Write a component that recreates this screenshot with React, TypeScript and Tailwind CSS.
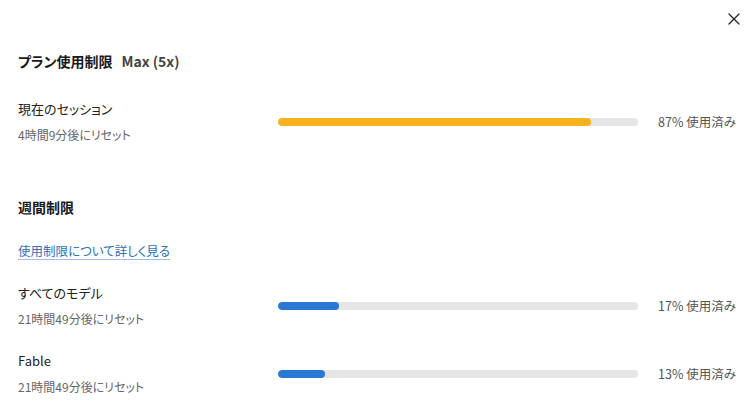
import React from "react";

const font = { fontFamily: '"Noto Sans CJK JP", "Noto Sans", sans-serif' };

function Bar({ pct, color }: { pct: number; color: string }) {
  return (
    <div className="h-[8px] w-[360px] rounded-full bg-[#e6e6e6] overflow-hidden">
      <div className={`h-full rounded-full ${color}`} style={{ width: `${pct}%` }} />
    </div>
  );
}

function Row({
  label,
  sub,
  pct,
  color,
  className,
}: {
  label: string;
  sub: string;
  pct: number;
  color: string;
  className?: string;
}) {
  return (
    <div className={`flex items-center ${className ?? ""}`}>
      <div className="w-[260px] flex flex-col">
        <div className="text-[13px] leading-[20px] text-[#222]">{label}</div>
        <div className="mt-[7px] text-[12px] leading-[18px] text-[#666]">{sub}</div>
      </div>
      <Bar pct={pct} color={color} />
      <div className="ml-[20px] text-[12.5px] leading-[18px] text-[#555] whitespace-nowrap">
        {pct}% 使用済み
      </div>
    </div>
  );
}

export default function App() {
  return (
    <div
      className="relative w-[753px] h-[415px] bg-white pl-[18px] pt-[51px] [font-feature-settings:'palt']"
      style={font}
    >
      <button className="absolute right-[13px] top-[13px] w-[12px] h-[12px] flex items-center justify-center">
        <svg width="12" height="12" viewBox="0 0 12 12">
          <path d="M1 1 L11 11 M11 1 L1 11" stroke="#222" strokeWidth="1.3" strokeLinecap="round" />
        </svg>
      </button>

      <div className="flex items-baseline text-[14px] leading-[20px] font-bold text-[#1a1a1a]">
        <span>プラン使用制限</span>
        <span className="ml-[9px] font-semibold text-[#444]">Max (5x)</span>
      </div>

      <Row
        className="mt-[28px]"
        label="現在のセッション"
        sub="4時間9分後にリセット"
        pct={87}
        color="bg-[#f8b21d]"
      />

      <div className="mt-[53px] text-[14px] leading-[20px] font-bold text-[#1a1a1a]">週間制限</div>

      <div className="mt-[24px] text-[12.5px] leading-[20px]">
        <a
          href="#"
          className="text-[#2f6fb8] underline decoration-[#9dbde4] underline-offset-[3px]"
        >
          使用制限について詳しく見る
        </a>
      </div>

      <Row
        className="mt-[22px]"
        label="すべてのモデル"
        sub="21時間49分後にリセット"
        pct={17}
        color="bg-[#2a78d6]"
      />

      <Row
        className="mt-[23px]"
        label="Fable"
        sub="21時間49分後にリセット"
        pct={13}
        color="bg-[#2a78d6]"
      />
    </div>
  );
}
